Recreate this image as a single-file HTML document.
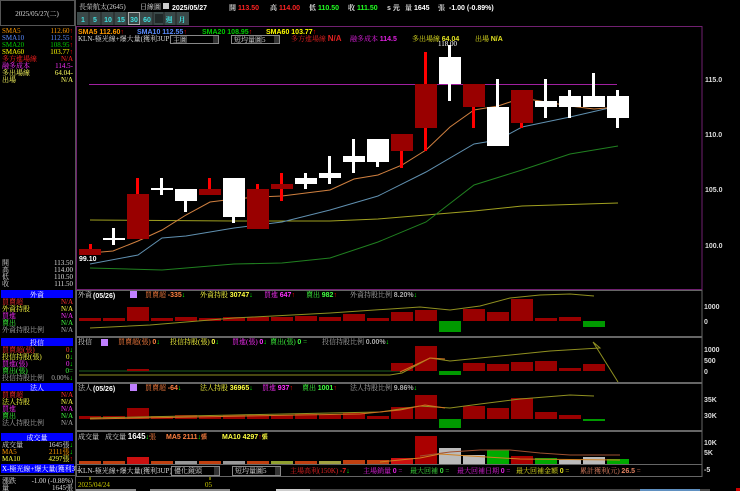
<!DOCTYPE html>
<html><head><meta charset="utf-8"><style>
body{margin:0;background:#000;width:740px;height:491px;overflow:hidden}
svg{display:block}
text{font-family:"Liberation Serif","Noto Serif CJK TC",serif;font-size:7px}
.b{font-family:"Liberation Sans","Noto Sans CJK TC",sans-serif;font-weight:bold}
</style></head><body>
<svg width="740" height="491" viewBox="0 0 740 491" xmlns="http://www.w3.org/2000/svg">
<rect width="740" height="491" fill="#000"/>
<!-- left header -->
<rect x="0.5" y="0.5" width="74" height="25" fill="none" stroke="#555"/>
<text x="37" y="16" fill="#ddd" text-anchor="middle" font-size="7">2025/05/27(二)</text>
<line x1="75.5" y1="0" x2="75.5" y2="491" stroke="#555"/>
<!-- left SMA list -->
<g font-size="6.5">
<text x="2" y="33" fill="#ff9900">SMA5</text><text x="73" y="33" fill="#ff9900" text-anchor="end">112.60<tspan fill="#f00">↑</tspan></text>
<text x="2" y="40" fill="#5a8cff">SMA10</text><text x="73" y="40" fill="#5a8cff" text-anchor="end">112.55<tspan fill="#f00">↑</tspan></text>
<text x="2" y="47" fill="#00cc00">SMA20</text><text x="73" y="47" fill="#00cc00" text-anchor="end">108.95<tspan fill="#f00">↑</tspan></text>
<text x="2" y="54" fill="#ffff00">SMA60</text><text x="73" y="54" fill="#ffff00" text-anchor="end">103.77<tspan fill="#f00">↑</tspan></text>
<text x="2" y="61" fill="#ff2020">多方進場線</text><text x="73" y="61" fill="#ff2020" text-anchor="end">N/A</text>
<text x="2" y="68" fill="#ff30ff">融多成本</text><text x="73" y="68" fill="#ff30ff" text-anchor="end">114.5-</text>
<text x="2" y="75" fill="#ffff60">多出場線</text><text x="73" y="75" fill="#ffff60" text-anchor="end">64.04-</text>
<text x="2" y="82" fill="#ffff60">出場</text><text x="73" y="82" fill="#ffff60" text-anchor="end">N/A</text>
<text x="2" y="265" fill="#ddd">開</text><text x="73" y="265" fill="#ddd" text-anchor="end">113.50</text>
<text x="2" y="272" fill="#ddd">高</text><text x="73" y="272" fill="#ddd" text-anchor="end">114.00</text>
<text x="2" y="279" fill="#ddd">低</text><text x="73" y="279" fill="#ddd" text-anchor="end">110.50</text>
<text x="2" y="286" fill="#ddd">收</text><text x="73" y="286" fill="#ddd" text-anchor="end">111.50</text>
</g>
<!-- left sections -->
<g font-size="6.5">
<rect x="1" y="290" width="72" height="8" fill="#0000ff"/><text x="37" y="297" fill="#fff" text-anchor="middle">外資</text>
<text x="2" y="304" fill="#ff3030">買賣超</text><text x="73" y="304" fill="#ff3030" text-anchor="end">N/A</text>
<text x="2" y="311" fill="#ffff40">外資持股</text><text x="73" y="311" fill="#ffff40" text-anchor="end">N/A</text>
<text x="2" y="318" fill="#ff30ff">買進</text><text x="73" y="318" fill="#ff30ff" text-anchor="end">N/A</text>
<text x="2" y="325" fill="#40ff40">賣出</text><text x="73" y="325" fill="#40ff40" text-anchor="end">N/A</text>
<text x="2" y="332" fill="#aaa">外資持股比例</text><text x="73" y="332" fill="#aaa" text-anchor="end">N/A</text>
<rect x="1" y="338" width="72" height="8" fill="#0000ff"/><text x="37" y="345" fill="#fff" text-anchor="middle">投信</text>
<text x="2" y="352" fill="#ff3030">買賣超(張)</text><text x="73" y="352" fill="#ff3030" text-anchor="end">0<tspan fill="#0f0">↓</tspan></text>
<text x="2" y="359" fill="#ffff40">投信持股(張)</text><text x="73" y="359" fill="#ffff40" text-anchor="end">0<tspan fill="#0f0">↓</tspan></text>
<text x="2" y="366" fill="#ff30ff">買進(張)</text><text x="73" y="366" fill="#ff30ff" text-anchor="end">0<tspan fill="#0f0">↓</tspan></text>
<text x="2" y="373" fill="#40ff40">賣出(張)</text><text x="73" y="373" fill="#40ff40" text-anchor="end">0=</text>
<text x="2" y="380" fill="#aaa">投信持股比例</text><text x="73" y="380" fill="#aaa" text-anchor="end">0.00%<tspan fill="#0f0">↓</tspan></text>
<rect x="1" y="383" width="72" height="8" fill="#0000ff"/><text x="37" y="390" fill="#fff" text-anchor="middle">法人</text>
<text x="2" y="397" fill="#ff3030">買賣超</text><text x="73" y="397" fill="#ff3030" text-anchor="end">N/A</text>
<text x="2" y="404" fill="#ffff40">法人持股</text><text x="73" y="404" fill="#ffff40" text-anchor="end">N/A</text>
<text x="2" y="411" fill="#ff30ff">買進</text><text x="73" y="411" fill="#ff30ff" text-anchor="end">N/A</text>
<text x="2" y="418" fill="#40ff40">賣出</text><text x="73" y="418" fill="#40ff40" text-anchor="end">N/A</text>
<text x="2" y="425" fill="#aaa">法人持股比例</text><text x="73" y="425" fill="#aaa" text-anchor="end">N/A</text>
<rect x="1" y="433" width="72" height="8" fill="#0000ff"/><text x="37" y="440" fill="#fff" text-anchor="middle">成交量</text>
<text x="2" y="447" fill="#ddd">成交量</text><text x="73" y="447" fill="#ddd" text-anchor="end">1645張<tspan fill="#0f0">↓</tspan></text>
<text x="2" y="454" fill="#ff9900">MA5</text><text x="73" y="454" fill="#ff9900" text-anchor="end">2111張<tspan fill="#0f0">↓</tspan></text>
<text x="2" y="461" fill="#ffff40">MA10</text><text x="73" y="461" fill="#ffff40" text-anchor="end">4297張<tspan fill="#f00">↑</tspan></text>
<rect x="1" y="464" width="73" height="9" fill="#0000ff"/><text x="2" y="471" fill="#fff">X-極光線+爆大量(獲利3U</text>
<line x1="0" y1="475.5" x2="75" y2="475.5" stroke="#555"/>
<text x="2" y="483" fill="#ddd">漲跌</text><text x="73" y="483" fill="#ddd" text-anchor="end">-1.00 (-0.88%)</text>
<text x="2" y="490" fill="#ddd">量</text><text x="73" y="490" fill="#ddd" text-anchor="end">1645張</text>
</g>
<!-- top bar -->
<text x="79" y="9" fill="#ddd" font-size="7">長榮航太(2645)</text>
<text x="140" y="9" fill="#ddd" font-size="7">日線圖</text>
<rect x="163" y="3" width="6" height="6" fill="#ccc"/>
<g class="b" font-size="9">
<text x="172" y="10" fill="#fff" class="b" font-size="9.5">2025/05/27</text>
<text x="229" y="10" fill="#ddd" font-size="7">開</text><text x="238" y="10" fill="#f22" class="b" font-size="9">113.50</text>
<text x="270" y="10" fill="#ddd" font-size="7">高</text><text x="279" y="10" fill="#f22" class="b" font-size="9">114.00</text>
<text x="309" y="10" fill="#ddd" font-size="7">低</text><text x="318" y="10" fill="#2f2" class="b" font-size="9">110.50</text>
<text x="348" y="10" fill="#ddd" font-size="7">收</text><text x="357" y="10" fill="#2f2" class="b" font-size="9">111.50</text>
<text x="387" y="10" fill="#ddd" class="b" font-size="7">s 元</text>
<text x="405" y="10" fill="#ddd" font-size="7">量</text><text x="414" y="10" fill="#fff" class="b" font-size="9">1645</text>
<text x="438" y="10" fill="#ddd" font-size="7">張</text><text x="449" y="10" fill="#fff" class="b" font-size="9">-1.00 (-0.89%)</text>
</g>
<!-- buttons -->
<g font-size="8" class="b">
<rect x="77" y="12" width="112" height="13" fill="#3a4848"/>
<g fill="#40e0e0" text-anchor="middle">
<text x="83" y="22" class="b" font-size="8">1</text>
<text x="95" y="22" class="b" font-size="8">5</text>
<text x="108" y="22" class="b" font-size="8">10</text>
<text x="121" y="22" class="b" font-size="8">15</text>
<text x="134" y="22" class="b" font-size="8">30</text>
<text x="147" y="22" class="b" font-size="8">60</text>
<text x="169" y="22" font-size="6">週</text>
<text x="182" y="22" font-size="6">月</text>
</g>
<rect x="128.5" y="12.5" width="11" height="12" fill="none" stroke="#aaa"/>
<rect x="155" y="14" width="8" height="9" fill="#202828"/>
<g stroke="#222"><line x1="89" y1="12" x2="89" y2="25"/><line x1="101" y1="12" x2="101" y2="25"/><line x1="114" y1="12" x2="114" y2="25"/><line x1="127" y1="12" x2="127" y2="25"/><line x1="153" y1="12" x2="153" y2="25"/><line x1="164" y1="12" x2="164" y2="25"/><line x1="176" y1="12" x2="176" y2="25"/></g>
</g>
<!-- main chart frame -->
<rect x="76.5" y="26.5" width="625.5" height="263" fill="none" stroke="#702070"/>
<g class="b" font-size="8">
<text x="78" y="34" fill="#ff9900" class="b" font-size="8">SMA5 112.60<tspan fill="#f00">↑</tspan></text>
<text x="137" y="34" fill="#5a8cff" class="b" font-size="8">SMA10 112.55<tspan fill="#f00">↑</tspan></text>
<text x="202" y="34" fill="#00cc00" class="b" font-size="8">SMA20 108.95<tspan fill="#f00">↑</tspan></text>
<text x="266" y="34" fill="#ffff00" class="b" font-size="8">SMA60 103.77<tspan fill="#f00">↑</tspan></text>
</g>
<text x="78" y="41" fill="#ddd" font-size="6.5">KLN-極光線+爆大量(獲利3UP)</text>
<rect x="170.5" y="35.5" width="48" height="8" fill="#000" stroke="#888"/><text x="173" y="42" fill="#ddd" font-size="6">主圖</text><rect x="213" y="36" width="5" height="7" fill="#333"/>
<rect x="231.5" y="35.5" width="48" height="8" fill="#000" stroke="#888"/><text x="234" y="42" fill="#ddd" font-size="6">短均量圖5</text><rect x="274" y="36" width="5" height="7" fill="#333"/>
<text x="291" y="41" fill="#e02020" font-size="6">多方進場線 <tspan class="b" font-size="8">N/A</tspan></text>
<text x="350" y="41" fill="#e020e0" font-size="6">融多成本 <tspan class="b" font-size="7">114.5</tspan></text>
<text x="412" y="41" fill="#e0e020" font-size="6">多出場線 <tspan class="b" font-size="7">64.04</tspan></text>
<text x="475" y="41" fill="#e0e020" font-size="6">出場 <tspan class="b" font-size="7">N/A</tspan></text>
<text x="438" y="46" fill="#fff" font-size="7">118.00</text>
<text x="79" y="261" fill="#fff" font-size="7" class="b">99.10</text>
<!-- axis -->
<g fill="#ddd" font-size="7" class="b">
<text x="705" y="82" class="b" font-size="7">115.0</text>
<text x="705" y="137" class="b" font-size="7">110.0</text>
<text x="705" y="192" class="b" font-size="7">105.0</text>
<text x="705" y="248" class="b" font-size="7">100.0</text>
<text x="704" y="309" class="b" font-size="7">1000</text><text x="704" y="324" class="b" font-size="7">0</text>
<text x="704" y="352" class="b" font-size="7">1000</text><text x="704" y="363" class="b" font-size="7">500</text><text x="704" y="374" class="b" font-size="7">0</text>
<text x="704" y="402" class="b" font-size="7">35K</text><text x="704" y="418" class="b" font-size="7">30K</text>
<text x="704" y="445" class="b" font-size="7">10K</text><text x="704" y="455" class="b" font-size="7">5K</text><text x="704" y="472" class="b" font-size="7">-5</text>
</g>
<line x1="89" y1="84.5" x2="617" y2="84.5" stroke="#a020a0"/>
<!-- MAs -->
<polyline fill="none" stroke="#a0a020" stroke-width="1" points="90,220 234,221 330,221 378,219 426,215 474,211 522,206 618,203"/>
<polyline fill="none" stroke="#208020" stroke-width="1" points="90,268 162,270 234,264 282,263 330,258 378,242 426,222 474,185 522,170 570,154 618,146"/>
<polyline fill="none" stroke="#6090b0" stroke-width="1" points="90,264 138,255 162,238 186,236 234,228 282,222 330,210 378,196 426,172 474,144 498,140 522,127 570,117 618,106"/>
<polyline fill="none" stroke="#d08040" stroke-width="1" points="90,253 113,251 138,241 162,230 186,215 210,202 234,199 258,197 282,196 306,193 330,190 354,179 378,175 402,165 426,150 450,127 474,110 498,106 522,98 546,102 570,106 594,109 618,107"/>
<!-- candles -->
<g>
<rect x="89" y="244" width="3" height="6" fill="#f00"/><rect x="79" y="249" width="22" height="6" fill="#990000"/>
<rect x="112" y="228" width="3" height="17" fill="#fff"/><rect x="103" y="238" width="22" height="2" fill="#fff"/>
<rect x="136" y="178" width="3" height="17" fill="#f00"/><rect x="127" y="194" width="22" height="45" fill="#990000"/>
<rect x="160" y="178" width="3" height="17" fill="#fff"/><rect x="151" y="188" width="22" height="2" fill="#fff"/>
<rect x="184" y="189" width="3" height="23" fill="#fff"/><rect x="175" y="189" width="22" height="12" fill="#fff"/>
<rect x="208" y="178" width="3" height="12" fill="#f00"/><rect x="199" y="189" width="22" height="6" fill="#990000"/>
<rect x="232" y="178" width="3" height="45" fill="#fff"/><rect x="223" y="178" width="22" height="39" fill="#fff"/>
<rect x="256" y="184" width="3" height="6" fill="#f00"/><rect x="247" y="189" width="22" height="40" fill="#990000"/>
<rect x="280" y="173" width="3" height="28" fill="#f00"/><rect x="271" y="184" width="22" height="5" fill="#990000"/>
<rect x="304" y="173" width="3" height="16" fill="#fff"/><rect x="295" y="178" width="22" height="6" fill="#fff"/>
<rect x="328" y="156" width="3" height="28" fill="#fff"/><rect x="319" y="173" width="22" height="5" fill="#fff"/>
<rect x="352" y="139" width="3" height="34" fill="#fff"/><rect x="343" y="156" width="22" height="6" fill="#fff"/>
<rect x="376" y="139" width="3" height="28" fill="#fff"/><rect x="367" y="139" width="22" height="23" fill="#fff"/>
<rect x="400" y="150" width="3" height="18" fill="#f00"/><rect x="391" y="134" width="22" height="17" fill="#990000"/>
<rect x="424" y="52" width="3" height="99" fill="#f00"/><rect x="415" y="84" width="22" height="44" fill="#990000"/>
<rect x="448" y="45" width="3" height="56" fill="#fff"/><rect x="439" y="57" width="22" height="27" fill="#fff"/>
<rect x="472" y="106" width="3" height="22" fill="#f00"/><rect x="463" y="84" width="22" height="23" fill="#990000"/>
<rect x="496" y="79" width="3" height="28" fill="#fff"/><rect x="487" y="107" width="22" height="39" fill="#fff"/>
<rect x="520" y="122" width="3" height="6" fill="#f00"/><rect x="511" y="90" width="22" height="33" fill="#990000"/>
<rect x="544" y="79" width="3" height="39" fill="#fff"/><rect x="535" y="101" width="22" height="6" fill="#fff"/>
<rect x="568" y="90" width="3" height="28" fill="#fff"/><rect x="559" y="96" width="22" height="11" fill="#fff"/>
<rect x="592" y="73" width="3" height="23" fill="#fff"/><rect x="583" y="96" width="22" height="11" fill="#fff"/>
<rect x="616" y="90" width="3" height="38" fill="#fff"/><rect x="607" y="96" width="22" height="22" fill="#fff"/>
</g>
<!-- sub panel frames -->
<g fill="none" stroke="#666">
<rect x="76.5" y="290.5" width="625.5" height="46"/>
<rect x="76.5" y="337.5" width="625.5" height="45"/>
<rect x="76.5" y="383.5" width="625.5" height="47"/>
<rect x="76.5" y="431.5" width="625.5" height="33"/>
<rect x="76.5" y="464.5" width="625.5" height="12"/>
</g>
<!-- panel 1 -->
<text x="78" y="297" fill="#ddd" font-size="6">外資</text>
<text x="93" y="298" fill="#fff" class="b" font-size="8">(05/26)</text>
<rect x="130" y="291" width="7" height="7" fill="#c080ff"/>
<text x="145" y="297" fill="#ff8040" font-size="6">買賣超 <tspan class="b" font-size="7">-335</tspan><tspan fill="#0f0">↓</tspan></text>
<text x="200" y="297" fill="#ffff40" font-size="6">外資持股 <tspan class="b" font-size="7">30747</tspan><tspan fill="#0f0">↓</tspan></text>
<text x="264" y="297" fill="#ff30ff" font-size="6">買進 <tspan class="b" font-size="7">647</tspan><tspan fill="#f00">↑</tspan></text>
<text x="306" y="297" fill="#40ff40" font-size="6">賣出 <tspan class="b" font-size="7">982</tspan><tspan fill="#f00">↑</tspan></text>
<text x="350" y="297" fill="#aaa" font-size="6">外資持股比例 <tspan class="b" font-size="7">8.20%</tspan><tspan fill="#0f0">↓</tspan></text>
<g fill="#990000">
<rect x="79" y="318" width="22" height="3"/><rect x="103" y="318" width="22" height="3"/><rect x="127" y="307" width="22" height="14"/>
<rect x="151" y="318" width="22" height="3"/><rect x="175" y="317" width="22" height="4"/><rect x="199" y="318" width="22" height="3"/>
<rect x="223" y="317" width="22" height="4"/><rect x="247" y="317" width="22" height="4"/><rect x="271" y="317" width="22" height="4"/>
<rect x="295" y="316" width="22" height="5"/><rect x="319" y="317" width="22" height="4"/><rect x="343" y="314" width="22" height="7"/>
<rect x="367" y="318" width="22" height="3"/><rect x="391" y="312" width="22" height="9"/><rect x="415" y="310" width="22" height="11"/>
<rect x="463" y="309" width="22" height="12"/><rect x="487" y="312" width="22" height="9"/><rect x="511" y="299" width="22" height="22"/>
<rect x="535" y="318" width="22" height="3"/><rect x="559" y="317" width="22" height="4"/>
</g>
<rect x="439" y="321" width="22" height="11" fill="#009900"/><rect x="583" y="321" width="22" height="6" fill="#009900"/>
<polyline fill="none" stroke="#909020" points="90,328 150,325 234,318 330,313 420,307 450,310 480,306 510,298 540,295 570,294 594,296"/>
<!-- panel 2 -->
<text x="78" y="344" fill="#ddd" font-size="6">投信</text>
<rect x="101" y="339" width="7" height="7" fill="#c080ff"/>
<text x="118" y="344" fill="#ff8040" font-size="6">買賣超(張) <tspan class="b" font-size="7">0</tspan><tspan fill="#0f0">↓</tspan></text>
<text x="170" y="344" fill="#ffff40" font-size="6">投信持股(張) <tspan class="b" font-size="7">0</tspan><tspan fill="#0f0">↓</tspan></text>
<text x="232" y="344" fill="#ff30ff" font-size="6">買進(張) <tspan class="b" font-size="7">0</tspan><tspan fill="#0f0">↓</tspan></text>
<text x="270" y="344" fill="#40ff40" font-size="6">賣出(張) <tspan class="b" font-size="7">0</tspan> =</text>
<text x="322" y="344" fill="#aaa" font-size="6">投信持股比例 <tspan class="b" font-size="7">0.00%</tspan><tspan fill="#0f0">↓</tspan></text>
<line x1="79" y1="371" x2="400" y2="371" stroke="#206020"/>
<rect x="127" y="369" width="22" height="2" fill="#990000"/>
<g fill="#990000">
<rect x="391" y="363" width="22" height="8"/><rect x="415" y="346" width="22" height="25"/><rect x="463" y="363" width="22" height="8"/>
<rect x="487" y="364" width="22" height="7"/><rect x="511" y="362" width="22" height="9"/><rect x="535" y="361" width="22" height="10"/>
<rect x="559" y="368" width="22" height="3"/><rect x="583" y="364" width="22" height="7"/>
</g>
<rect x="439" y="371" width="22" height="4" fill="#009900"/>
<polyline fill="none" stroke="#909020" points="79,375 390,375 402,373 430,358 450,361 480,358 550,351 600,348 593,342 618,382"/>
<polyline fill="none" stroke="#d07020" points="400,372 430,358 445,359"/>
<!-- panel 3 -->
<text x="78" y="390" fill="#ddd" font-size="6">法人</text>
<text x="93" y="391" fill="#fff" class="b" font-size="8">(05/26)</text>
<rect x="130" y="384" width="7" height="7" fill="#c080ff"/>
<text x="145" y="390" fill="#ff8040" font-size="6">買賣超 <tspan class="b" font-size="7">-64</tspan><tspan fill="#0f0">↓</tspan></text>
<text x="200" y="390" fill="#ffff40" font-size="6">法人持股 <tspan class="b" font-size="7">36965</tspan><tspan fill="#0f0">↓</tspan></text>
<text x="262" y="390" fill="#ff30ff" font-size="6">買進 <tspan class="b" font-size="7">937</tspan><tspan fill="#f00">↑</tspan></text>
<text x="302" y="390" fill="#40ff40" font-size="6">賣出 <tspan class="b" font-size="7">1001</tspan><tspan fill="#f00">↑</tspan></text>
<text x="350" y="390" fill="#aaa" font-size="6">法人持股比例 <tspan class="b" font-size="7">9.86%</tspan><tspan fill="#0f0">↓</tspan></text>
<g fill="#990000">
<rect x="79" y="416" width="22" height="3"/><rect x="103" y="416" width="22" height="3"/><rect x="127" y="408" width="22" height="11"/>
<rect x="151" y="416" width="22" height="3"/><rect x="175" y="415" width="22" height="4"/><rect x="199" y="416" width="22" height="3"/>
<rect x="223" y="415" width="22" height="4"/><rect x="247" y="415" width="22" height="4"/><rect x="271" y="415" width="22" height="4"/>
<rect x="295" y="414" width="22" height="5"/><rect x="319" y="415" width="22" height="4"/><rect x="343" y="413" width="22" height="6"/>
<rect x="367" y="416" width="22" height="3"/><rect x="391" y="407" width="22" height="12"/><rect x="415" y="395" width="22" height="24"/>
<rect x="463" y="406" width="22" height="13"/><rect x="487" y="408" width="22" height="11"/><rect x="511" y="398" width="22" height="21"/>
<rect x="535" y="412" width="22" height="7"/><rect x="559" y="415" width="22" height="4"/>
</g>
<rect x="439" y="419" width="22" height="9" fill="#009900"/><rect x="583" y="419" width="22" height="2" fill="#009900"/>
<polyline fill="none" stroke="#909020" points="90,418 234,415 330,413 380,412 420,406 450,408 480,404 520,399 570,395 594,396"/>
<polyline fill="none" stroke="#d07020" points="90,419 300,415 360,414 400,410 425,405 445,408"/>
<!-- panel 4 -->
<text x="78" y="439" fill="#ddd" font-size="6">成交量</text>
<text x="105" y="439" fill="#ddd" font-size="6">成交量 <tspan class="b" font-size="8" fill="#fff">1645</tspan><tspan fill="#0f0">↓</tspan><tspan fill="#ff8040">張</tspan></text>
<text x="166" y="439" fill="#ff8040" class="b" font-size="8">MA5 2111<tspan fill="#0f0">↓</tspan><tspan font-size="6">張</tspan></text>
<text x="222" y="439" fill="#ffff40" class="b" font-size="8">MA10 4297<tspan fill="#f00">↑</tspan><tspan font-size="6">張</tspan></text>
<g>
<rect x="79" y="461" width="22" height="3" fill="#c04010"/><rect x="103" y="461" width="22" height="3" fill="#c04010"/><rect x="127" y="457" width="22" height="7" fill="#cc1010"/>
<rect x="151" y="461" width="22" height="3" fill="#c04010"/><rect x="175" y="461" width="22" height="3" fill="#999"/><rect x="199" y="461" width="22" height="3" fill="#c04010"/>
<rect x="223" y="461" width="22" height="3" fill="#999"/><rect x="247" y="461" width="22" height="3" fill="#c04010"/><rect x="271" y="461" width="22" height="3" fill="#90a030"/>
<rect x="295" y="461" width="22" height="3" fill="#c04010"/><rect x="319" y="461" width="22" height="3" fill="#a0a040"/><rect x="343" y="460" width="22" height="4" fill="#c04010"/>
<rect x="367" y="460" width="22" height="4" fill="#c04010"/><rect x="391" y="458" width="22" height="6" fill="#cc1010"/><rect x="415" y="436" width="22" height="28" fill="#aa0000"/>
<rect x="439" y="448" width="22" height="16" fill="#bbb"/><rect x="463" y="455" width="22" height="9" fill="#bbb"/><rect x="487" y="450" width="22" height="14" fill="#00aa00"/>
<rect x="511" y="456" width="22" height="8" fill="#aa0000"/><rect x="535" y="458" width="22" height="6" fill="#00aa00"/><rect x="559" y="460" width="22" height="4" fill="#bbb"/>
<rect x="583" y="457" width="22" height="7" fill="#bbb"/><rect x="607" y="459" width="22" height="5" fill="#00aa00"/>
</g>
<polyline fill="none" stroke="#a05030" points="420,456 450,452 480,450 510,450 540,453 570,455 620,455"/>
<polyline fill="none" stroke="#d08020" points="380,462 420,458 440,454 470,456 520,459 620,460"/>
<!-- bottom controls -->
<text x="78" y="473" fill="#ddd" font-size="6">KLN-極光線+爆大量(獲利3UP)</text>
<rect x="171.5" y="466.5" width="48" height="9" fill="#000" stroke="#888"/><text x="174" y="473" fill="#ddd" font-size="6">優化鏡頭</text><rect x="214" y="467" width="5" height="8" fill="#333"/>
<rect x="232.5" y="466.5" width="48" height="9" fill="#000" stroke="#888"/><text x="235" y="473" fill="#ddd" font-size="6">短均量圖5</text><rect x="275" y="467" width="5" height="8" fill="#333"/>
<text x="290" y="473" fill="#e02020" font-size="6">主場高利(150K) <tspan class="b" font-size="7">-7</tspan><tspan fill="#0f0">↓</tspan></text>
<text x="363" y="473" fill="#e020e0" font-size="6">主場銷量 <tspan class="b" font-size="7">0</tspan> =</text>
<text x="410" y="473" fill="#40e040" font-size="6">最大回補 <tspan class="b" font-size="7">0</tspan> =</text>
<text x="457" y="473" fill="#e020e0" font-size="6">最大回補日期 <tspan class="b" font-size="7">0</tspan> =</text>
<text x="516" y="473" fill="#e0e020" font-size="6">最大回補金額 <tspan class="b" font-size="7">0</tspan> =</text>
<text x="580" y="473" fill="#e08060" font-size="6">累計獲利(元) <tspan class="b" font-size="7">26.5</tspan> =</text>
<!-- date row -->
<line x1="90" y1="477" x2="90" y2="480" stroke="#cc0"/><line x1="210" y1="477" x2="210" y2="480" stroke="#cc0"/>
<text x="78" y="487" fill="#cccc00" font-size="7">2025/04/24</text>
<text x="205" y="487" fill="#cccc00" font-size="7">05</text>
<g fill="#888"><rect x="76" y="489" width="60" height="2"/><rect x="150" y="489" width="80" height="2"/><rect x="276" y="489" width="34" height="2" fill="#ccc"/><rect x="310" y="489" width="400" height="2" fill="#444"/><rect x="640" y="489" width="60" height="2" fill="#6090c0"/></g>
<rect x="736" y="488" width="4" height="3" fill="#c00"/>
</svg>
</body></html>
